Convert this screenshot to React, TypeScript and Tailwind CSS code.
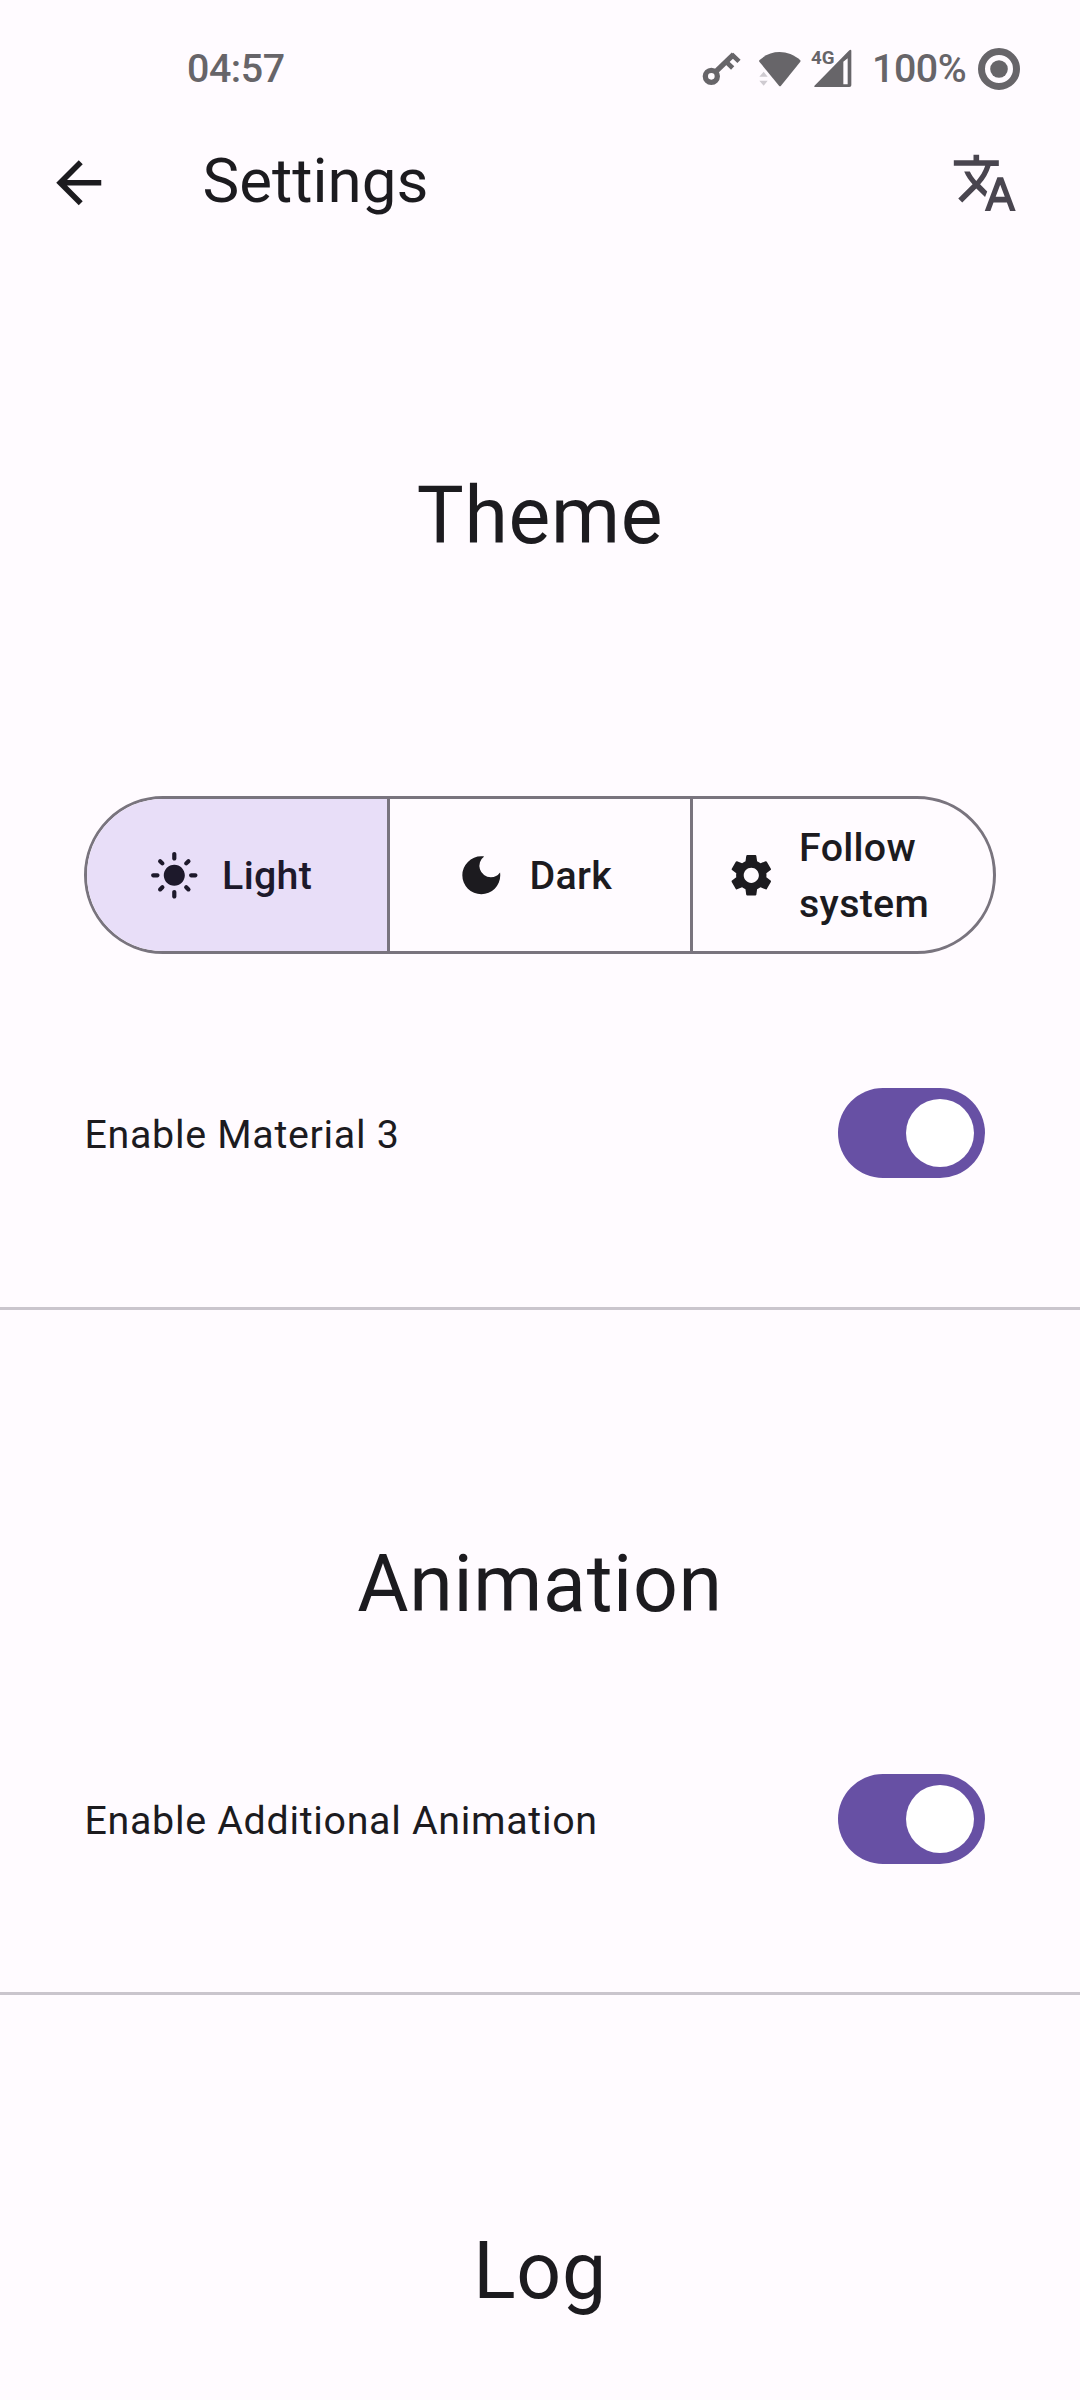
import type { ReactNode } from "react";
import {
  MdArrowBack,
  MdDarkMode,
  MdLightMode,
  MdSettings,
  MdTranslate,
} from "react-icons/md";

function KeyIcon() {
  return (
    <svg className="mt-[21px] h-[35px] w-[40px]" viewBox="0 0 120 105" fill="none" stroke="#676569">
      <circle cx="31" cy="76" r="18" strokeWidth="16" />
      <path d="M42 64 98 10" strokeWidth="16" />
      <path d="M92 10 114 31M74 31 95 51" strokeWidth="14" />
    </svg>
  );
}

function WifiIcon() {
  return (
    <svg className="mt-[21px] h-[36px] w-[44px]" viewBox="0 0 132 108">
      <path d="M4 77 17 62 29 77ZM4 89H29L17 104Z" fill="#cfcbd1" />
      <path d="M4 28C39-5 90-5 127 28Q128 30 127 32L69 104Q66 107 63 104L4 32Q3 30 4 28Z" fill="#676569" />
    </svg>
  );
}

function SignalIcon() {
  return (
    <div className="relative mt-[19px] h-[39px] w-[41px]">
      <svg className="h-full w-full" viewBox="0 0 123 117">
        <path
          fillRule="evenodd"
          fill="#676569"
          d="M12 109 115 4Q121 0 121 6V109Q121 114 115 114H13Q6 114 12 109ZM97 38V106H110V28Z"
        />
      </svg>
      <span className="absolute left-0 top-0 text-[18.7px] font-bold leading-[18px]">4G</span>
    </div>
  );
}

function BatteryIcon() {
  return (
    <svg className="mt-[18px] h-[42px] w-[42px]" viewBox="0 0 42 42" fill="none">
      <circle cx="21" cy="21" r="17.5" stroke="#676569" strokeWidth="7" />
      <circle cx="21" cy="21" r="8.8" fill="#676569" />
    </svg>
  );
}

function StatusBar() {
  return (
    <div className="flex h-[120px] items-start pl-[187px] pr-[60px] pt-[30px] font-medium text-[#676569]">
      <span className="mt-[16px] text-[39.375px] leading-[46px] tracking-[-0.45px]">04:57</span>
      <div className="ml-auto flex items-start">
        <KeyIcon />
        <div className="ml-[17px]"><WifiIcon /></div>
        <div className="ml-[9px]"><SignalIcon /></div>
        <span className="ml-[20px] mr-[12px] mt-[16px] w-[94px] text-[39.375px] leading-[46px] tracking-[-0.45px]">
          100%
        </span>
        <BatteryIcon />
      </div>
    </div>
  );
}

function AppBar() {
  return (
    <header className="flex h-[127px] items-center pl-[45px] pr-[62px]">
      <MdArrowBack className="mb-px size-[67.5px]" />
      <h1 className="ml-[90px] pb-[5px] text-[61.875px] leading-[79px]">Settings</h1>
      <MdTranslate className="mb-px ml-auto size-[67.5px] text-[#49454f]" />
    </header>
  );
}

function Heading({ children }: { children: ReactNode }) {
  return (
    <h2 className="text-center text-[78.75px] leading-[101px] tracking-[0.7px]">{children}</h2>
  );
}

function SwitchRow({ label }: { label: string }) {
  return (
    <div className="flex h-[90px] items-center justify-between pl-[84.5px] pr-[95.5px]">
      <span className="pt-[3px] text-[39.375px] leading-[56px] tracking-[0.7px]">{label}</span>
      <button
        role="switch"
        aria-checked="true"
        aria-label={label}
        className="flex h-[90px] w-[146.3px] items-center justify-end rounded-full bg-[#6750a4] pr-[11px]"
      >
        <span className="size-[68px] rounded-full bg-white" />
      </button>
    </div>
  );
}

function ThemePicker() {
  return (
    <div className="mx-[84px] flex h-[158px] overflow-hidden rounded-full border-3 border-[#79747e] text-[39.375px] font-medium leading-[56.25px] tracking-[0.28px]">
      <button className="flex w-[303px] items-center gap-[22.5px] border-r-3 border-[#79747e] bg-[#e8def8] pl-[62px] text-[#1d192b]">
        <MdLightMode className="size-[50.6px] shrink-0" />
        <span className="pt-[2px]">Light</span>
      </button>
      <button className="flex w-[303px] items-center gap-[22.7px] border-r-3 border-[#79747e] pl-[66.3px]">
        <MdDarkMode className="size-[50.6px] shrink-0" />
        <span className="pt-[2px]">Dark</span>
      </button>
      <button className="flex flex-1 items-center gap-[22.7px] pl-[32.8px] text-left">
        <MdSettings className="size-[50.6px] shrink-0" />
        <span className="pt-[2px]">
          Follow
          <br />
          system
        </span>
      </button>
    </div>
  );
}

export default function App() {
  return (
    <main className="h-[2400px] w-[1080px] overflow-hidden bg-[#fffbff] font-['Roboto',sans-serif] text-[#1c1b1f]">
      <StatusBar />
      <AppBar />
      <section className="h-[1063px] border-b-3 border-[#cac5cd] pt-[219px]">
        <Heading>Theme</Heading>
        <div className="mt-[229px]"><ThemePicker /></div>
        <div className="mt-[134.4px]"><SwitchRow label="Enable Material 3" /></div>
      </section>
      <section className="h-[685px] border-b-3 border-[#cac5cd] pt-[224px]">
        <Heading>Animation</Heading>
        <div className="mt-[139.2px]"><SwitchRow label="Enable Additional Animation" /></div>
      </section>
      <section className="pt-[226px]">
        <Heading>Log</Heading>
      </section>
    </main>
  );
}
